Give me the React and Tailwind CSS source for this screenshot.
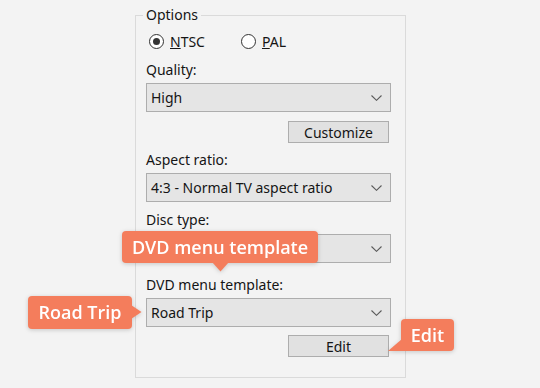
import React from "react";

const Chevron = () => (
  <svg width="11" height="6" viewBox="0 0 11 6" fill="none" stroke="#5a5a5a" strokeWidth="1.1">
    <path d="M0.5 0.5 L5.5 5.3 L10.5 0.5" />
  </svg>
);

function Select({ children, className = "" }) {
  return (
    <div
      className={`flex h-[29px] items-center justify-between border border-[#adadad] bg-[#e5e5e5] pl-[4px] pr-[8px] text-[14px] text-[#151515] ${className}`}
    >
      <span>{children}</span>
      <Chevron />
    </div>
  );
}

function Btn({ children, className = "" }) {
  return (
    <div className={`flex justify-end ${className}`}>
      <div className="mr-[2px] flex h-[22px] w-[101px] items-center justify-center border border-[#adadad] bg-[#e1e1e1] text-[14px] text-[#151515]">
        {children}
      </div>
    </div>
  );
}

function Label({ children, className = "" }) {
  return <div className={`h-[18px] text-[14px] leading-[18px] text-[#151515] ${className}`}>{children}</div>;
}

function Radio({ checked }) {
  return (
    <span className="flex h-[15px] w-[15px] items-center justify-center rounded-full border-[1.5px] border-[#333] bg-white">
      {checked && <span className="h-[7px] w-[7px] rounded-full bg-[#333]" />}
    </span>
  );
}

const tip = "font-['Open_Sans',sans-serif] text-[18px] font-semibold text-white";

export default function App() {
  return (
    <div className="relative h-[388px] w-[540px] overflow-hidden bg-[#f3f3f3] font-['Noto_Sans',sans-serif]">
      <div className="pt-[6px] pl-[135px]">
        <fieldset className="h-[372px] w-[271px] border border-[#dadada] pl-[10px] pr-[14px]">
          <legend className="ml-[-3px] px-[3px] text-[14px] leading-[18px] text-[#151515]">Options</legend>
          <div className="mt-[8px] flex h-[18px] items-center text-[14px] text-[#151515]">
            <span className="ml-[3px]"><Radio checked /></span>
            <span className="ml-[6px]"><u>N</u>TSC</span>
            <span className="ml-[36px]"><Radio /></span>
            <span className="ml-[6px]"><u>P</u>AL</span>
          </div>
          <Label className="mt-[11px]">Quality:</Label>
          <Select className="mt-[4px]">High</Select>
          <Btn className="mt-[9px]">Customize</Btn>
          <Label className="mt-[8px]">Aspect ratio:</Label>
          <Select className="mt-[4px]">4:3 - Normal TV aspect ratio</Select>
          <Label className="mt-[9px]">Disc type:</Label>
          <Select className="mt-[5px]"> </Select>
          <Label className="mt-[13px]">DVD menu template:</Label>
          <Select className="mt-[4px]">Road Trip</Select>
          <Btn className="mt-[8px]">Edit</Btn>
        </fieldset>
      </div>

      {/* DVD menu template tooltip */}
      <div className="absolute left-[122px] top-[231px] drop-shadow-[0_1px_2px_rgba(0,0,0,0.18)]">
        <div className={`flex h-[32px] w-[196px] items-center justify-center rounded-[4px] bg-[#f47d5c] ${tip}`}>
          DVD menu template
        </div>
        <svg className="absolute left-[90px] top-[31px]" width="17" height="10" viewBox="0 0 17 10">
          <path d="M0 0 L8.5 9.5 L17 0 Z" fill="#f47d5c" />
        </svg>
      </div>

      {/* Road Trip tooltip */}
      <div className="absolute left-[28px] top-[296px] drop-shadow-[0_1px_2px_rgba(0,0,0,0.18)]">
        <div className={`flex h-[33px] w-[104px] items-center justify-center rounded-[4px] bg-[#f47d5c] ${tip}`}>
          Road Trip
        </div>
        <svg className="absolute left-[103px] top-[9px]" width="11" height="14" viewBox="0 0 11 14">
          <path d="M0 0 L10.5 7 L0 14 Z" fill="#f47d5c" />
        </svg>
      </div>

      {/* Edit tooltip */}
      <div className="absolute left-[401px] top-[319px] drop-shadow-[0_1px_2px_rgba(0,0,0,0.18)]">
        <div className={`flex h-[32px] w-[53px] items-center justify-center rounded-[4px] rounded-bl-none bg-[#f47d5c] ${tip}`}>
          Edit
        </div>
        <svg className="absolute left-[-13px] top-[20px]" width="14" height="12" viewBox="0 0 14 12">
          <path d="M14 0 L0 12 L14 12 Z" fill="#f47d5c" />
        </svg>
      </div>
    </div>
  );
}
